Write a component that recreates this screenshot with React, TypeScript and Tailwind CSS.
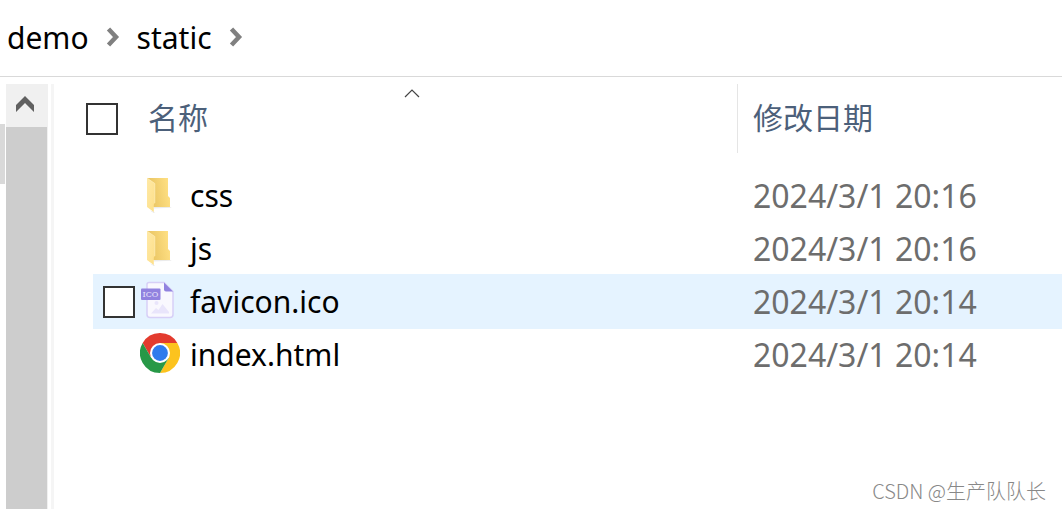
type FileKind = "folder" | "ico" | "chrome";

type FileItem = {
  name: string;
  date: string;
  kind: FileKind;
  hovered?: boolean;
};

const path = ["demo", "static"];

const files: FileItem[] = [
  { name: "css", date: "2024/3/1 20:16", kind: "folder" },
  { name: "js", date: "2024/3/1 20:16", kind: "folder" },
  { name: "favicon.ico", date: "2024/3/1 20:14", kind: "ico", hovered: true },
  { name: "index.html", date: "2024/3/1 20:14", kind: "chrome" },
];

const FolderIcon = () => (
  <svg viewBox="0 0 40 40" className="size-10" aria-hidden="true">
    <defs>
      <linearGradient id="folder-back" x1="0" x2="1" y1="0.6" y2="0.4">
        <stop offset="0.2" stopColor="#ebc766" />
        <stop offset="1" stopColor="#ffe083" />
      </linearGradient>
      <linearGradient id="folder-front" x1="0" y1="0" x2="1" y2="1">
        <stop offset="0" stopColor="#ffe9a6" />
        <stop offset="1" stopColor="#fddf88" />
      </linearGradient>
    </defs>
    <path d="M14 33H31L31.500 33.800 14 34.500z" fill="#000" opacity=".08" />
    <path d="M10 36.500 15 38.300 13.500 38.800z" fill="#000" opacity=".12" />
    <path d="M7 4H28V22L30 24V33H13L7 30z" fill="url(#folder-back)" />
    <path d="M7 4 14.800 9.500V29L13.800 30.500V38L7 33z" fill="url(#folder-front)" />
    <path d="M7 4 14.800 9.500V29" fill="none" stroke="#fff3c8" strokeWidth=".6" />
  </svg>
);

const IcoIcon = () => (
  <svg viewBox="0 0 40 40" className="size-10" aria-hidden="true">
    <path
      d="M9 2.500H24L33 11.500V34.500Q33 37.500 30 37.500H10Q7 37.500 7 34.500V4.500Q7 2.500 9 2.500z"
      fill="#f9f8fe"
      stroke="#d7cff7"
      strokeWidth="1.500"
    />
    <path d="M24 2.500 33 11.500H26Q24 11.500 24 9.500z" fill="#9182df" />
    <circle cx="16.500" cy="23" r="2" fill="#e9e5fb" />
    <path d="M11 33.500 16 28 18.500 30 22.500 24 29 32V33.500z" fill="#e9e5fb" />
    <rect x="1" y="8.500" width="19.500" height="11.500" rx="1" fill="#9182df" />
    <text
      x="10.500"
      y="17"
      textAnchor="middle"
      fontSize="8"
      fill="#e9e5fb"
      className="font-['DejaVu_Serif',serif]"
    >
      ICO
    </text>
  </svg>
);

const ChromeIcon = () => (
  <svg viewBox="0 0 48 48" className="size-10" aria-hidden="true">
    <path d="M24 12H44.785A24 24 0 0 0 3.215 12L13.608 30z" fill="#e33b2e" />
    <path d="M34.392 30 24 48A24 24 0 0 0 44.785 12H24z" fill="#fcc31e" />
    <path d="M13.608 30 3.215 12A24 24 0 0 0 24 48L34.392 30z" fill="#279847" />
    <circle cx="24" cy="24" r="12" fill="#fff" />
    <circle cx="24" cy="24" r="9.500" fill="#2f7bed" />
  </svg>
);

const icons = {
  folder: FolderIcon,
  ico: IcoIcon,
  chrome: ChromeIcon,
};

const Checkbox = ({ label }: { label: string }) => (
  <input
    type="checkbox"
    aria-label={label}
    className="size-8 shrink-0 appearance-none border-2 border-[#333] bg-white checked:bg-[#0078d7]"
  />
);

const Breadcrumb = () => (
  <nav aria-label="demo" className="flex h-[77px] items-center border-b border-[#d9d9d9] pl-[7px]">
    {path.map((part) => (
      <div key={part} className="flex items-center">
        <a href="#" className="text-[30px] leading-10 text-black">
          {part}
        </a>
        <svg viewBox="0 0 14 20" className="mr-[17px] mb-[3px] ml-[17px] h-5 w-[14px]" aria-hidden="true">
          <path d="M2.500 2 10 10 2.500 18" fill="none" stroke="#808080" strokeWidth="4.500" />
        </svg>
      </div>
    ))}
  </nav>
);

const Scrollbar = () => (
  <div className="flex shrink-0 border-r-3 border-[#f5f5f5] pr-[3px]">
    <div className="mt-10 h-[60px] w-[5px] bg-[#d9d9d9]" />
    <div className="ml-px flex w-[42px] flex-col bg-[#f0f0f0]">
      <button
        type="button"
        aria-label="▲"
        className="flex h-[43px] items-center justify-center pr-1 pb-1"
      >
        <svg viewBox="0 0 18 16" className="h-4 w-[18px]" aria-hidden="true">
          <path d="M0 9 9 0 18 9V16L9 7 0 16z" fill="#606060" />
        </svg>
      </button>
      <div className="mr-px flex-1 bg-[#cdcdcd]" />
    </div>
  </div>
);

const FileRow = ({ file }: { file: FileItem }) => {
  const Icon = icons[file.kind];
  return (
    <tr>
      <td className="p-0 pl-[39px]">
        <div
          className={
            file.hovered
              ? "flex h-[53px] items-center bg-[#e5f3ff] pl-[10px] shadow-[0_1px_0_#e5f3ff,0_-1px_0_#e5f3ff]"
              : "flex h-[53px] items-center pl-[10px]"
          }
        >
          <div className="w-8 shrink-0">
            {file.hovered && (
              <div className="flex">
                <Checkbox label={file.name} />
              </div>
            )}
          </div>
          <div className="ml-[5px] shrink-0 pb-1">
            <Icon />
          </div>
          <span className="ml-[10px] text-[30px] leading-10 text-black">{file.name}</span>
        </div>
      </td>
      <td
        className={
          file.hovered
            ? "bg-[#e5f3ff] p-0 pl-[15px] text-[32px] leading-10 text-[#6d6d6d] shadow-[0_1px_0_#e5f3ff,0_-1px_0_#e5f3ff]"
            : "p-0 pl-[15px] text-[32px] leading-10 text-[#6d6d6d]"
        }
      >
        {file.date}
      </td>
    </tr>
  );
};

const FileTable = () => (
  <table className="w-full table-fixed border-separate border-spacing-0 text-left">
    <colgroup>
      <col className="w-[684px]" />
      <col />
    </colgroup>
    <thead>
      <tr className="text-[30px] leading-10 text-[#4c607a]">
        <th className="p-0 pl-8 font-normal">
          <div className="relative flex h-[69px] items-center border-r border-[#e5e5e5]">
            <Checkbox label="名称" />
            <span className="ml-[30px] pb-[2px]">名称</span>
            <svg
              viewBox="0 0 16 9"
              className="absolute top-[5px] left-1/2 h-[9px] w-4 -translate-x-1/2"
              aria-hidden="true"
            >
              <path d="M1 8 8 1 15 8" fill="none" stroke="#444" strokeWidth="1.200" />
            </svg>
          </div>
        </th>
        <th className="p-0 pb-[2px] pl-[15px] font-normal">修改日期</th>
      </tr>
    </thead>
    <tbody>
      <tr aria-hidden="true">
        <td colSpan={2} className="h-4 p-0" />
      </tr>
      {files.map((file) => (
        <FileRow key={file.name} file={file} />
      ))}
    </tbody>
  </table>
);

const App = () => {
  return (
    <div className="relative flex min-h-screen flex-col overflow-hidden bg-white font-['Noto_Sans','Noto_Sans_CJK_SC',sans-serif]">
      <Breadcrumb />
      <main className="flex flex-1 pt-[7px]">
        <Scrollbar />
        <div className="min-w-0 flex-1">
          <FileTable />
        </div>
      </main>
      <p className="absolute right-4 bottom-1 font-['Noto_Sans_CJK_SC',sans-serif] text-[20px] font-light leading-7 text-[#888]">
        CSDN @生产队队长
      </p>
    </div>
  );
};

export default App;
